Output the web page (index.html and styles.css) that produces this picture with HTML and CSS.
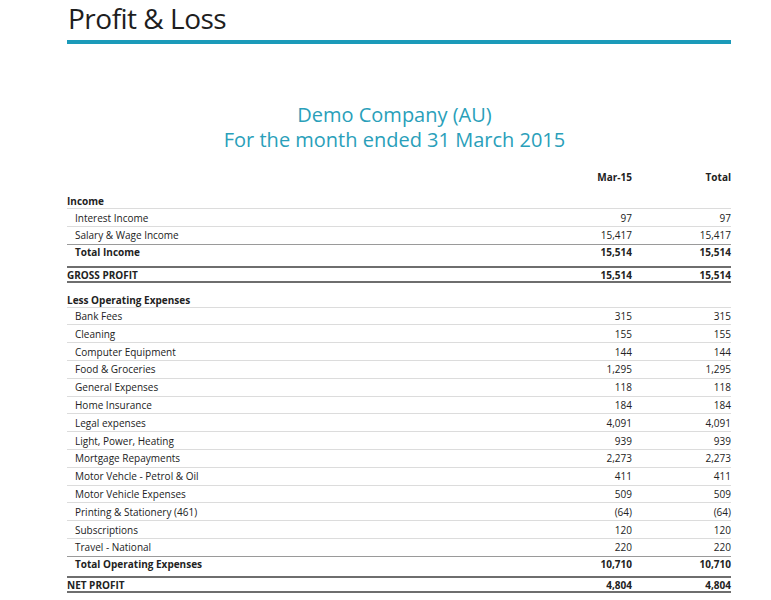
FILE: index.html
```html
<!DOCTYPE html>
<html>
<head>
<meta charset="utf-8">
<link rel="stylesheet" href="styles.css">
</head>
<body>
<div class="page">
  <h1 class="title">Profit &amp; Loss</h1>
  <div class="subtitle">
    <div>Demo Company (AU)</div>
    <div>For the month ended 31 March 2015</div>
  </div>
  <div class="report">
    <div class="row head"><span></span><span class="num">Mar-15</span><span class="num">Total</span></div>
    <div class="row section"><span>Income</span><span></span><span></span></div>
    <div class="row item"><span>Interest Income</span><span class="num">97</span><span class="num">97</span></div>
    <div class="row item last"><span>Salary &amp; Wage Income</span><span class="num">15,417</span><span class="num">15,417</span></div>
    <div class="row total"><span>Total Income</span><span class="num">15,514</span><span class="num">15,514</span></div>
    <div class="row grand"><span>GROSS PROFIT</span><span class="num">15,514</span><span class="num">15,514</span></div>

    <div class="row section gap"><span>Less Operating Expenses</span><span></span><span></span></div>
    <div class="row item"><span>Bank Fees</span><span class="num">315</span><span class="num">315</span></div>
    <div class="row item"><span>Cleaning</span><span class="num">155</span><span class="num">155</span></div>
    <div class="row item"><span>Computer Equipment</span><span class="num">144</span><span class="num">144</span></div>
    <div class="row item"><span>Food &amp; Groceries</span><span class="num">1,295</span><span class="num">1,295</span></div>
    <div class="row item"><span>General Expenses</span><span class="num">118</span><span class="num">118</span></div>
    <div class="row item"><span>Home Insurance</span><span class="num">184</span><span class="num">184</span></div>
    <div class="row item"><span>Legal expenses</span><span class="num">4,091</span><span class="num">4,091</span></div>
    <div class="row item"><span>Light, Power, Heating</span><span class="num">939</span><span class="num">939</span></div>
    <div class="row item"><span>Mortgage Repayments</span><span class="num">2,273</span><span class="num">2,273</span></div>
    <div class="row item"><span>Motor Vehcle - Petrol &amp; Oil</span><span class="num">411</span><span class="num">411</span></div>
    <div class="row item"><span>Motor Vehicle Expenses</span><span class="num">509</span><span class="num">509</span></div>
    <div class="row item"><span>Printing &amp; Stationery (461)</span><span class="num">(64)</span><span class="num">(64)</span></div>
    <div class="row item"><span>Subscriptions</span><span class="num">120</span><span class="num">120</span></div>
    <div class="row item last"><span>Travel - National</span><span class="num">220</span><span class="num">220</span></div>
    <div class="row total"><span>Total Operating Expenses</span><span class="num">10,710</span><span class="num">10,710</span></div>
    <div class="row grand net"><span>NET PROFIT</span><span class="num">4,804</span><span class="num">4,804</span></div>
  </div>
</div>
</body>
</html>
```

FILE: styles.css
```css
html, body {
  margin: 0;
  padding: 0;
  background: #ffffff;
}

body {
  font-family: "Open Sans", "Liberation Sans", sans-serif;
  color: #222222;
}

.page {
  width: 664px;
  margin-left: 67px;
}

.title {
  margin: 0;
  box-sizing: border-box;
  height: 44px;
  padding-left: 1px;
  font-size: 28px;
  font-weight: 400;
  line-height: 36px;
  letter-spacing: -0.5px;
  color: #1e1e1e;
  border-bottom: 4px solid #1b9ab9;
}

.subtitle {
  margin-top: 58px;
  text-align: center;
  font-size: 20px;
  line-height: 25px;
  color: #2a9fba;
  padding-right: 9px;
}

.report {
  margin-top: 16px;
  font-size: 10px;
}

.row {
  display: grid;
  grid-template-columns: 1fr 96px 99px;
  align-items: center;
  box-sizing: border-box;
  height: 17.8px;
  color: #222222;
}

.num {
  text-align: right;
}

.head {
  height: 18px;
  font-weight: 700;
  margin-bottom: 5.5px;
}

.section {
  font-weight: 700;
  border-bottom: 1px solid #dcdcdc;
  align-items: end;
  padding-bottom: 0;
}

.section.gap {
  margin-top: 7px;
}

.item {
  border-bottom: 1px solid #dcdcdc;
}

.item > span:first-child {
  padding-left: 8px;
}

.item.last {
  border-bottom: 1px solid #9a9a9a;
}

.total {
  font-weight: 700;
  height: 17px;
  align-items: start;
}

.total > span:first-child {
  padding-left: 8px;
}

.grand {
  margin-top: 4px;
  height: 17px;
  font-weight: 700;
  border-top: 2px solid #6e6e6e;
  border-bottom: 2px solid #6e6e6e;
}

.grand.net {
  margin-top: 2.5px;
  height: 16.5px;
}
```
